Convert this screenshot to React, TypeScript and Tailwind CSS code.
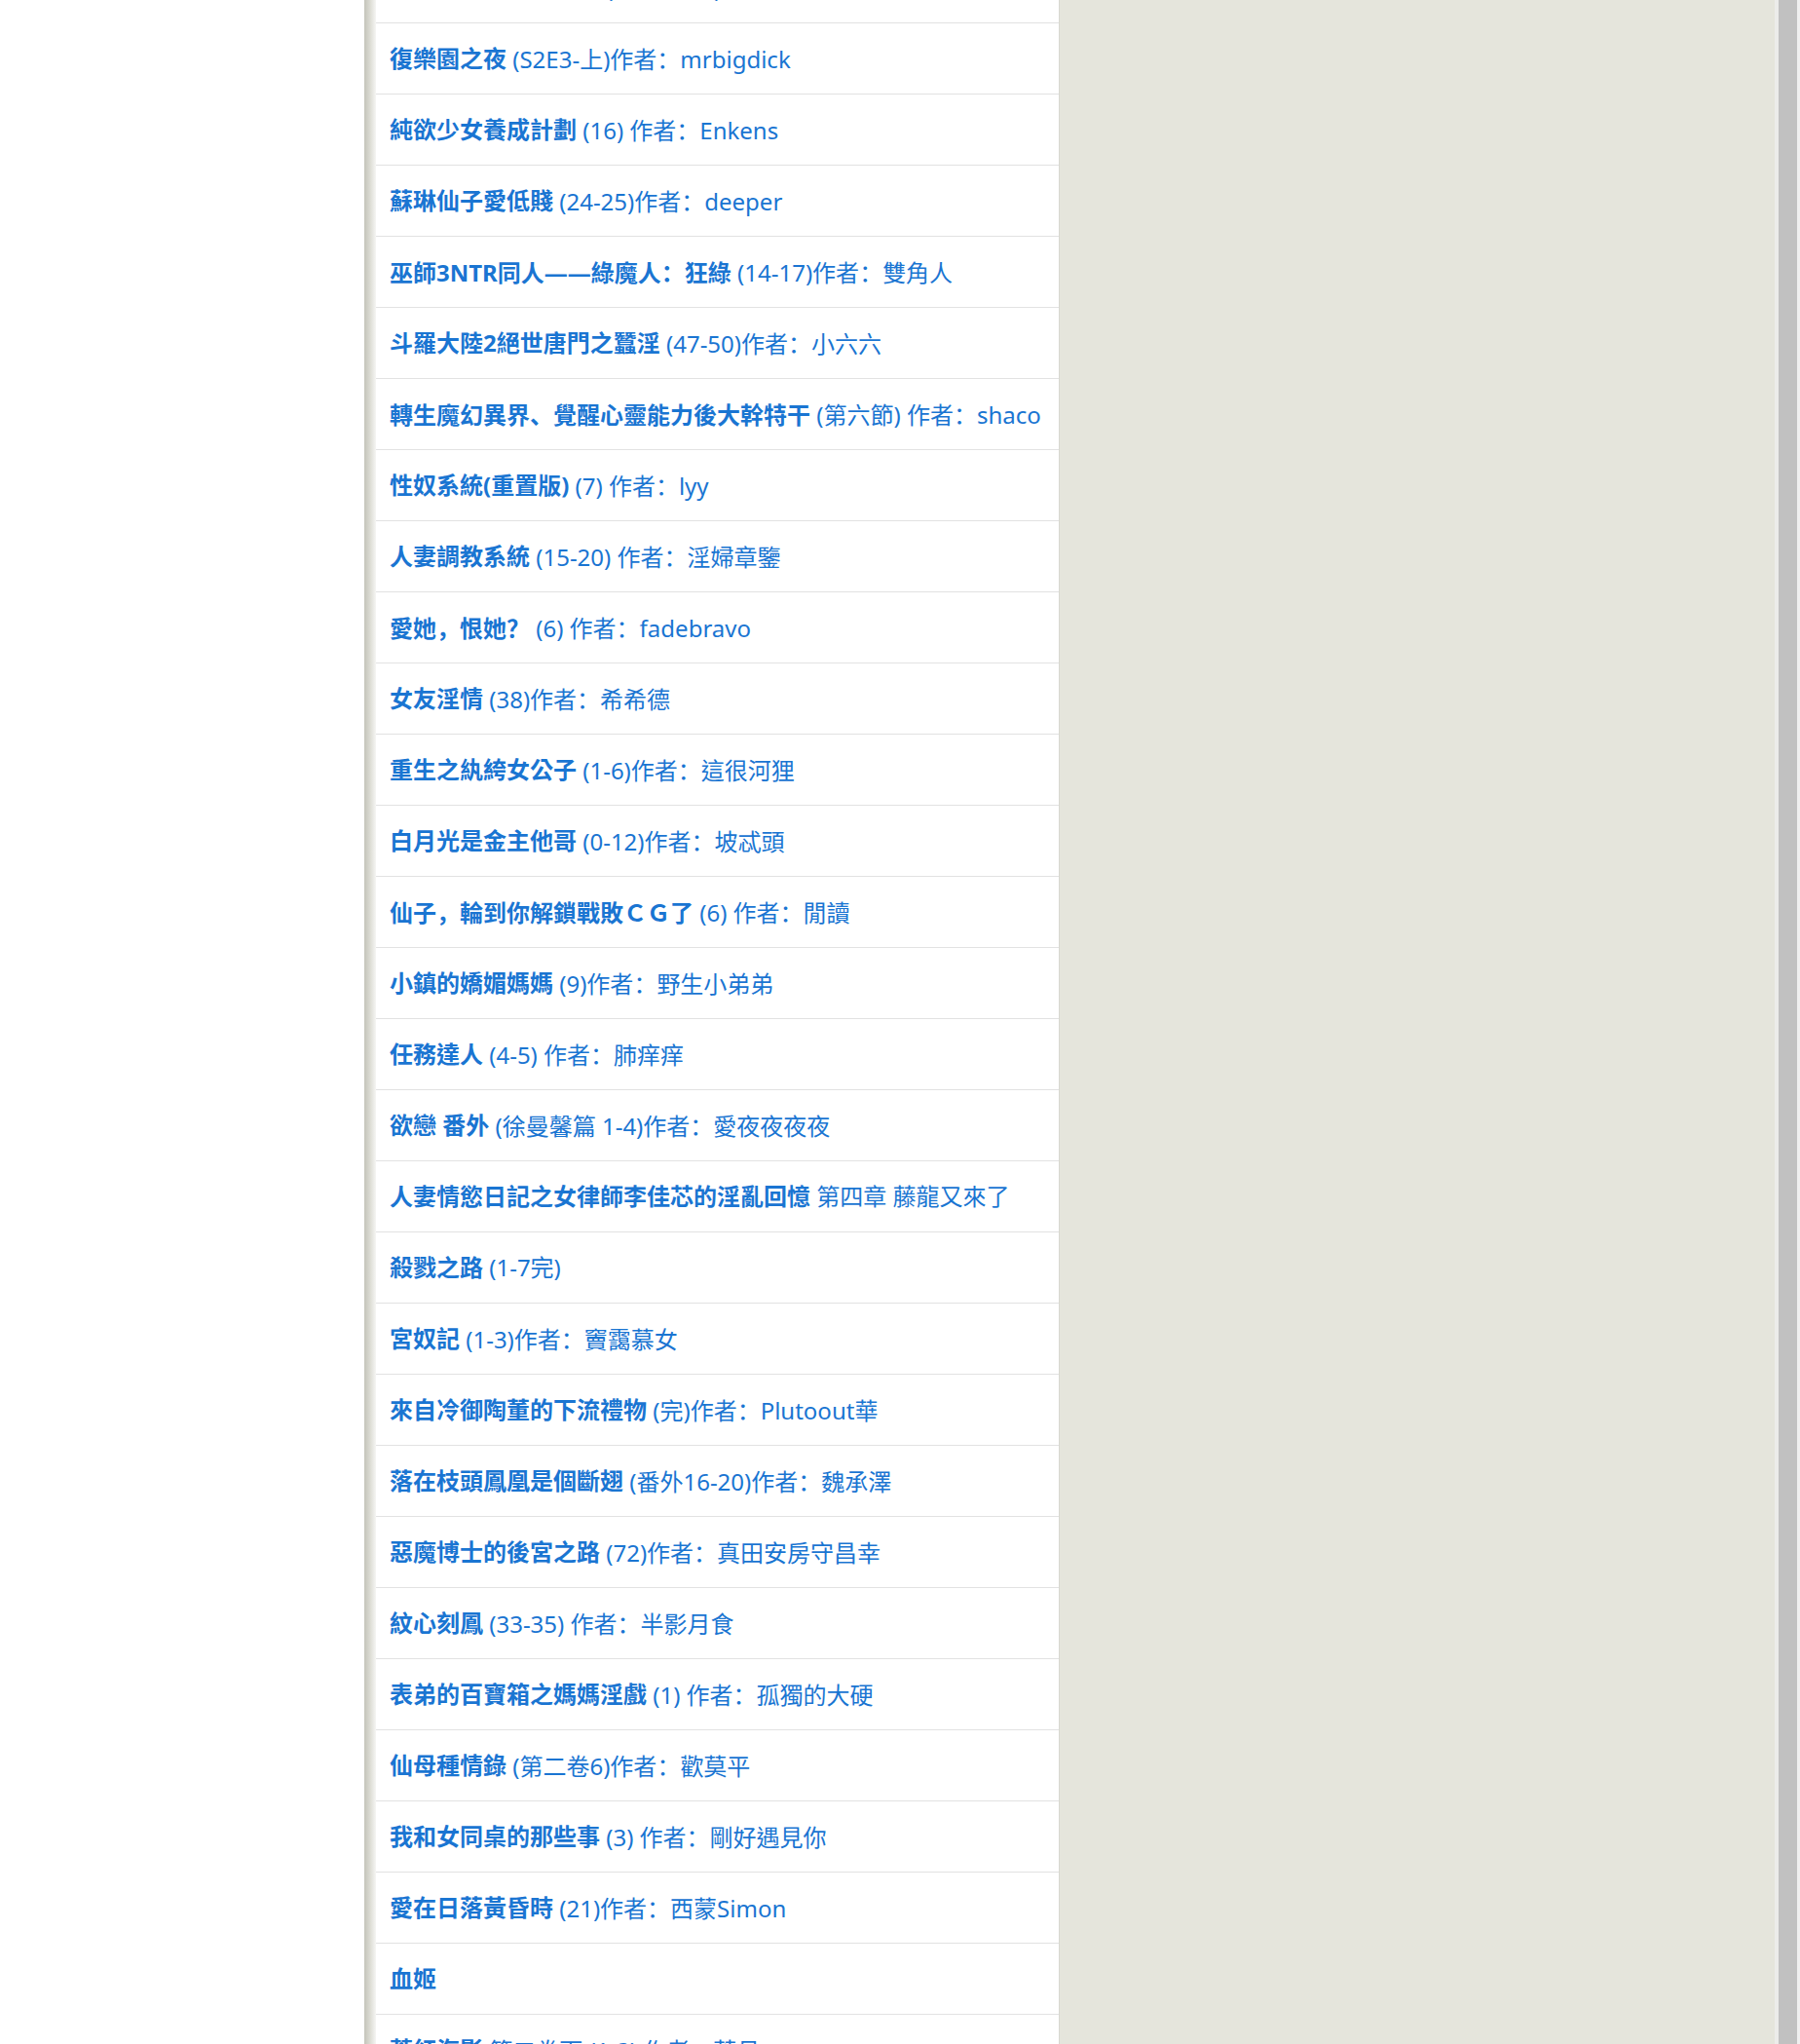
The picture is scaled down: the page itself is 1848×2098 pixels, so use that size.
import React from 'react';

const rows: [string, string][] = [
  ['淫亂人妻的墮落日記', '(第三章-下) 作者：夜半'],
  ['復樂園之夜', '(S2E3-上)作者：mrbigdick'],
  ['純欲少女養成計劃', '(16) 作者：Enkens'],
  ['蘇琳仙子愛低賤', '(24-25)作者：deeper'],
  ['巫師3NTR同人——綠魔人：狂綠', '(14-17)作者：雙角人'],
  ['斗羅大陸2絕世唐門之蠶淫', '(47-50)作者：小六六'],
  ['轉生魔幻異界、覺醒心靈能力後大幹特干', '(第六節) 作者：shaco'],
  ['性奴系統(重置版)', '(7) 作者：lyy'],
  ['人妻調教系統', '(15-20) 作者：淫婦章鑒'],
  ['愛她，恨她？', ' (6) 作者：fadebravo'],
  ['女友淫情', '(38)作者：希希德'],
  ['重生之紈絝女公子', '(1-6)作者：這很河狸'],
  ['白月光是金主他哥', '(0-12)作者：坡忒頭'],
  ['仙子，輪到你解鎖戰敗ＣＧ了', '(6) 作者：閒讀'],
  ['小鎮的嬌媚媽媽', '(9)作者：野生小弟弟'],
  ['任務達人', '(4-5) 作者：肺痒痒'],
  ['欲戀 番外', '(徐曼馨篇 1-4)作者：愛夜夜夜夜'],
  ['人妻情慾日記之女律師李佳芯的淫亂回憶', ' 第四章 藤龍又來了'],
  ['殺戮之路', '(1-7完)'],
  ['宮奴記', '(1-3)作者：竇靄慕女'],
  ['來自冷御陶董的下流禮物', '(完)作者：Plutoout華'],
  ['落在枝頭鳳凰是個斷翅', '(番外16-20)作者：魏承澤'],
  ['惡魔博士的後宮之路', '(72)作者：真田安房守昌幸'],
  ['紋心刻鳳', '(33-35) 作者：半影月食'],
  ['表弟的百寶箱之媽媽淫戲', '(1) 作者：孤獨的大硬'],
  ['仙母種情錄', '(第二卷6)作者：歡莫平'],
  ['我和女同桌的那些事', '(3) 作者：剛好遇見你'],
  ['愛在日落黃昏時', '(21)作者：西蒙Simon'],
  ['血姬', ''],
  ['蒼紅海影', '第二卷下 (1-3) 作者：蒼月'],
];

// full-width punctuation sits low-left in the reference, like the SC cut
function Punct({ text }: { text: string }) {
  return (
    <>
      {text.split(/([，、：？])/).map((part, i) =>
        /^[，、：？]$/.test(part) ? (
          <span key={i} className="font-['Noto_Sans_CJK_SC']">
            {part}
          </span>
        ) : (
          <React.Fragment key={i}>{part}</React.Fragment>
        ),
      )}
    </>
  );
}

export default function App() {
  return (
    <div className="flex h-[2098px] w-full overflow-hidden bg-white font-['Noto_Sans','Noto_Sans_CJK_TC',sans-serif]">
      <div className="w-[374px] shrink-0 bg-white" />
      <div className="w-[12px] shrink-0 bg-gradient-to-r from-[#c4c4ba] via-[#dcdcd4] to-[#f6f6f4]" />
      <div className="w-[701px] shrink-0 bg-white">
        <ul className="-mt-[49px]">
          {rows.map(([title, meta], i) => (
            <li
              key={i}
              className="flex h-[73px] items-center border-b border-[#e2e2e2] pl-[14px] text-[24px] leading-none whitespace-nowrap text-[#1a75d2]"
            >
              <span className="font-bold">
                <Punct text={title} />
              </span>
              {meta && (
                <span className="whitespace-pre">
                  <Punct text={meta.startsWith(' ') ? meta : ' ' + meta} />
                </span>
              )}
            </li>
          ))}
        </ul>
      </div>
      <div className="flex-1 border-l border-[#d8d8d0] bg-[#e5e5dc]" />
      <div className="w-[4px] shrink-0 bg-[#ececea]" />
      <div className="w-[19px] shrink-0 bg-[#c1c1c1]" />
      <div className="w-[3px] shrink-0 bg-[#f0f0f0]" />
    </div>
  );
}
